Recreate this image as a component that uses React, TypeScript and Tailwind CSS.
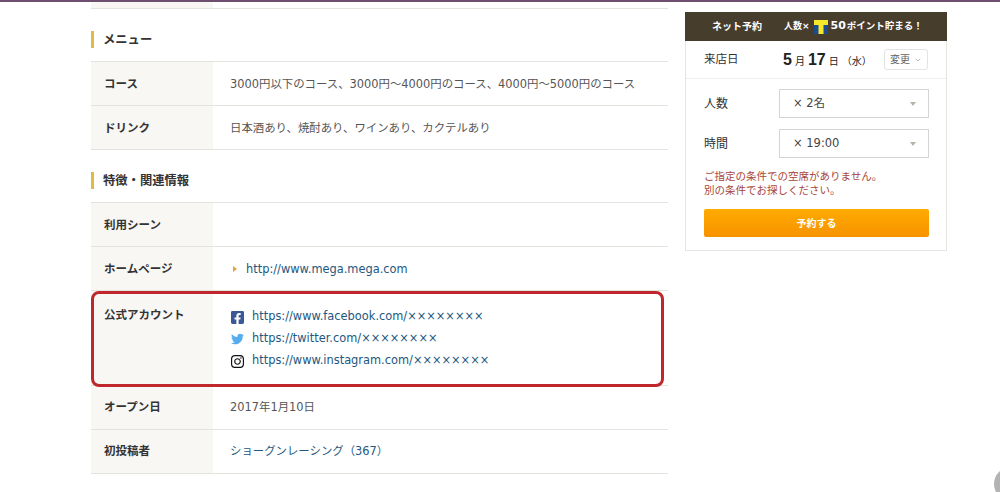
import { FaFacebookSquare, FaTwitter, FaInstagram } from 'react-icons/fa';
import { ChevronDown } from 'lucide-react';

const font = { fontFamily: '"DejaVu Sans", "Noto Sans CJK JP", sans-serif' };

function Heading({ title }: { title: string }) {
    return (
        <div className="flex h-[17px] items-center border-l-[3px] border-[#e3b93f] pl-[9px] pt-[2px] text-[12.3px] font-bold text-[#333]">
            {title}
        </div>
    );
}

function Row({ label, children, tight }: { label: string; children?: React.ReactNode; tight?: boolean }) {
    return (
        <div className="flex border-b border-[#e4e4df]">
            <div className={`w-[122px] shrink-0 bg-[#f8f7f3] pl-[13px] text-[11.5px] font-bold leading-[18px] text-[#333] ${tight ? 'pt-[12px]' : 'pt-[13px]'}`}>
                {label}
            </div>
            <div className={`min-h-[43px] flex-1 pl-[17px] text-[11.4px] leading-[18px] text-[#555] ${tight ? 'pt-[12px]' : 'pt-[13px]'}`}>
                {children}
            </div>
        </div>
    );
}

function SelectBox({ value }: { value: string }) {
    return (
        <div className="flex h-[29px] w-[150px] items-center justify-between border border-[#d5d5d5] pl-[13px] pr-[12px] text-[11.5px] text-[#444]">
            <span>{value}</span>
            <span className="h-0 w-0 border-x-[3px] border-t-[4px] border-x-transparent border-t-[#b5b5a8]" />
        </div>
    );
}

function TLogo() {
    return (
        <svg width="14" height="14" viewBox="0 0 14 14" className="block">
            <rect x="0" y="2" width="14" height="12" fill="#1c4a8c" />
            <rect x="0" y="0" width="14" height="5" fill="#f5e82a" />
            <rect x="4.5" y="0" width="5" height="14" fill="#f5e82a" />
        </svg>
    );
}

function SocialLink({ icon, url }: { icon: React.ReactNode; url: string }) {
    return (
        <div className="flex h-[22px] items-center gap-[8px] text-[#22577e]">
            <span className="flex w-[13px] items-center justify-center">{icon}</span>
            <span>{url}</span>
        </div>
    );
}

export default function App() {
    return (
        <div className="relative h-[492px] w-[1000px] overflow-hidden bg-white" style={font}>
            <div className="h-[2px] bg-[#6f4f70]" />
            <div className="ml-[91px] flex items-start gap-[17px]">
                {/* Main column */}
                <div className="w-[577px]">
                    <div className="h-[7px] border-b border-[#e4e4df]">
                        <div className="h-[6px] w-[122px] bg-[#f8f7f3]" />
                    </div>
                    <div className="mb-[13px] mt-[22px]">
                        <Heading title="メニュー" />
                    </div>
                    <div className="border-t border-[#e4e4df]">
                        <Row label="コース">3000円以下のコース、3000円〜4000円のコース、4000円〜5000円のコース</Row>
                        <Row label="ドリンク">日本酒あり、焼酎あり、ワインあり、カクテルあり</Row>
                    </div>
                    <div className="mb-[13px] mt-[22px]">
                        <Heading title="特徴・関連情報" />
                    </div>
                    <div className="border-t border-[#e4e4df]">
                        <Row label="利用シーン" />
                        <Row label="ホームページ">
                            <div className="flex items-center gap-[9px] text-[#22577e]">
                                <span className="ml-[3px] h-0 w-0 border-y-[3px] border-l-[4px] border-y-transparent border-l-[#e3a03f]" />
                                <span>http://www.mega.mega.com</span>
                            </div>
                        </Row>
                        <div className="flex h-[95px] border-b border-[#e4e4df]">
                            <div className="w-[122px] shrink-0 bg-[#f8f7f3] pl-[13px] pt-[15px] text-[11.5px] font-bold leading-[18px] text-[#333]">
                                公式アカウント
                            </div>
                            <div className="flex-1 pl-[18px] pt-[15px] text-[11.4px]">
                                <SocialLink icon={<FaFacebookSquare className="text-[15px] text-[#3b5998]" />} url="https://www.facebook.com/××××××××" />
                                <SocialLink icon={<FaTwitter className="text-[14px] text-[#55acee]" />} url="https://twitter.com/××××××××" />
                                <SocialLink icon={<FaInstagram className="text-[15px] text-[#111]" />} url="https://www.instagram.com/××××××××" />
                            </div>
                        </div>
                        <Row label="オープン日" tight>2017年1月10日</Row>
                        <Row label="初投稿者" tight>
                            <span className="text-[#22577e]">ショーグンレーシング（367）</span>
                        </Row>
                    </div>
                </div>

                {/* Reservation panel */}
                <div className="mt-[10px] h-[239px] w-[262px] border border-[#e6e6e1] border-t-0">
                    <div className="-mx-px flex h-[29px] items-center bg-[#473d2c] pl-[27px] text-white">
                        <span className="text-[10px] font-bold">ネット予約</span>
                        <span className="ml-[22px] text-[9px] font-bold">人数×</span>
                        <span className="ml-[4px]"><TLogo /></span>
                        <span className="ml-[3px] text-[11px] font-bold">50</span>
                        <span className="ml-[1px] text-[9.5px] font-bold">ポイント貯まる！</span>
                    </div>
                    <div className="flex h-[38px] items-center border-b border-[#eeeeea] pl-[18px] pr-[18px]">
                        <span className="w-[79px] text-[11.5px] text-[#333]">来店日</span>
                        <span className="flex items-baseline text-[#222]" style={{ fontFamily: '"Liberation Sans", "Noto Sans CJK JP", sans-serif' }}>
                            <span className="text-[16px] font-bold">5</span>
                            <span className="ml-[3px] text-[10px]">月</span>
                            <span className="ml-[3px] text-[16px] font-bold">17</span>
                            <span className="ml-[3px] text-[10px]">日</span>
                            <span className="ml-[3px] text-[10px]">（水）</span>
                        </span>
                        <div className="ml-auto flex h-[21px] w-[44px] items-center justify-center gap-[4px] rounded-[3px] border border-[#e3e3e3] text-[10px] text-[#666]">
                            変更
                            <ChevronDown size={8} className="text-[#999]" />
                        </div>
                    </div>
                    <div className="mt-[10px] flex items-center justify-between pl-[18px] pr-[17px]">
                        <span className="text-[12px] text-[#333]">人数</span>
                        <SelectBox value="× 2名" />
                    </div>
                    <div className="mt-[11px] flex items-center justify-between pl-[18px] pr-[17px]">
                        <span className="text-[12px] text-[#333]">時間</span>
                        <SelectBox value="× 19:00" />
                    </div>
                    <p className="mt-[11px] pl-[18px] text-[10.5px] leading-[14px] text-[#a8463c]">
                        ご指定の条件での空席がありません。<br />別の条件でお探しください。
                    </p>
                    <div className="ml-[18px] mr-[17px] mt-[12px] flex h-[28px] items-center justify-center rounded-[2px] bg-gradient-to-b from-[#ffab00] to-[#f79200] text-[10px] font-bold text-white">
                        予約する
                    </div>
                </div>
            </div>

            {/* Red highlight */}
            <div className="absolute left-[91px] top-[291px] h-[96px] w-[573px] rounded-[8px] border-[3px] border-[#c0272d]" />
            {/* Scroll circle */}
            <div className="absolute left-[994px] top-[467px] h-[34px] w-[34px] rounded-full bg-[#b3b3b3]" />
        </div>
    );
}
